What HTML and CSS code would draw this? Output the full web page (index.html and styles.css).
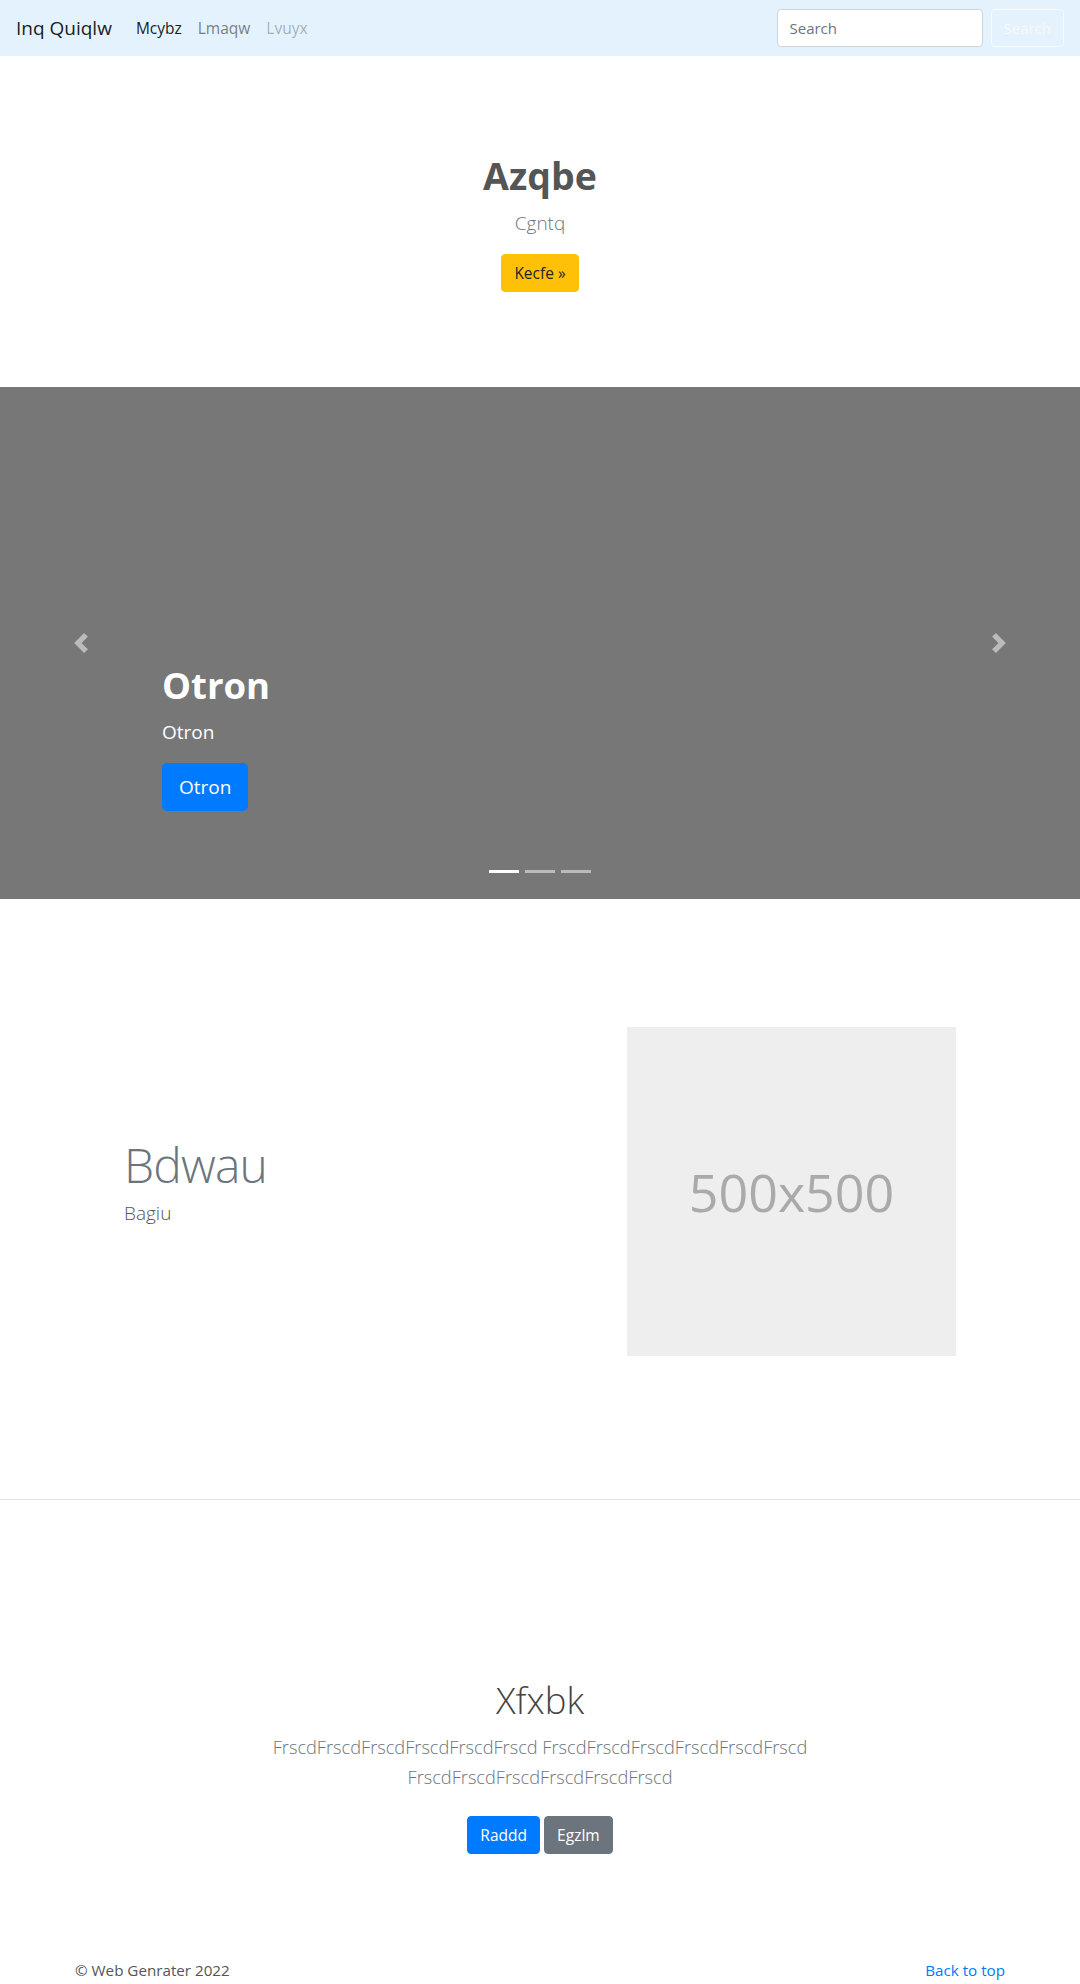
FILE: index.html
```html
<!DOCTYPE html>
<html lang="en">
<head>
<meta charset="utf-8">
<title>Inq Quiqlw</title>
<link rel="stylesheet" href="styles.css">
</head>
<body>
<nav class="navbar">
  <a class="brand" href="#">Inq Quiqlw</a>
  <ul class="nav">
    <li><a class="nav-link active" href="#">Mcybz</a></li>
    <li><a class="nav-link" href="#">Lmaqw</a></li>
    <li><a class="nav-link disabled" href="#">Lvuyx</a></li>
  </ul>
  <form class="search">
    <input class="search-input" type="search" placeholder="Search">
    <button class="btn-outline-light" type="button">Search</button>
  </form>
</nav>

<section class="hero">
  <h1 class="hero-title">Azqbe</h1>
  <p class="hero-lead">Cgntq</p>
  <a class="btn btn-warning" href="#">Kecfe »</a>
</section>

<div class="carousel">
  <div class="carousel-caption">
    <h1 class="caption-title">Otron</h1>
    <p class="caption-text">Otron</p>
    <p class="caption-action"><a class="btn-lg btn-primary" href="#">Otron</a></p>
  </div>
  <a class="control control-prev" href="#">
    <svg width="20" height="20" viewBox="0 0 8 8"><path fill="#fff" d="M5.25 0l-4 4 4 4 1.5-1.5L4.25 4l2.5-2.5L5.25 0z"/></svg>
  </a>
  <a class="control control-next" href="#">
    <svg width="20" height="20" viewBox="0 0 8 8"><path fill="#fff" d="M2.75 0l-1.5 1.5L3.75 4l-2.5 2.5L2.75 8l4-4-4-4z"/></svg>
  </a>
  <ol class="indicators">
    <li class="indicator active"></li>
    <li class="indicator"></li>
    <li class="indicator"></li>
  </ol>
</div>

<section class="featurette">
  <div class="featurette-text">
    <h2 class="featurette-heading">Bdwau</h2>
    <p class="featurette-lead">Bagiu</p>
  </div>
  <div class="placeholder">500x500</div>
</section>

<hr class="divider">

<section class="jumbo">
  <div class="jumbo-inner">
    <h1 class="jumbo-title">Xfxbk</h1>
    <p class="jumbo-lead">FrscdFrscdFrscdFrscdFrscdFrscd FrscdFrscdFrscdFrscdFrscdFrscd FrscdFrscdFrscdFrscdFrscdFrscd</p>
    <p class="jumbo-actions"><a class="btn btn-primary" href="#">Raddd</a> <a class="btn btn-secondary" href="#">Egzlm</a></p>
  </div>
</section>

<footer class="footer">
  <p class="footer-copy">© Web Genrater 2022</p>
  <p class="footer-top"><a href="#">Back to top</a></p>
</footer>
</body>
</html>
```

FILE: styles.css
```css
* { box-sizing: border-box; }

body {
  margin: 0;
  font-family: "Open Sans", "Noto Sans", sans-serif;
  font-size: 16px;
  line-height: 1.5;
  color: #212529;
  background: #fff;
}

a { text-decoration: none; }

/* Navbar */
.navbar {
  display: flex;
  align-items: center;
  padding: 8px 16px;
  background: #e3f2fd;
}
.brand {
  font-size: 19px;
  line-height: 30px;
  padding: 5px 0;
  margin-right: 16px;
  color: rgba(0,0,0,.9);
}
.nav {
  display: flex;
  list-style: none;
  margin: 0;
  padding: 0;
  flex: 1;
}
.nav-link {
  display: block;
  padding: 8px;
  font-size: 15.5px;
  line-height: 24px;
  color: rgba(0,0,0,.5);
}
.nav-link.active { color: rgba(0,0,0,.9); }
.nav-link.disabled { color: rgba(0,0,0,.3); }

.search { display: flex; }
.search-input {
  width: 206px;
  height: 38px;
  padding: 6px 12px;
  margin-right: 8px;
  font-family: inherit;
  font-size: 15px;
  color: #495057;
  background: #fff;
  border: 1px solid #ced4da;
  border-radius: 4px;
}
.search-input::placeholder { color: #6c757d; }
.btn-outline-light {
  height: 38px;
  padding: 6px 12px;
  font-family: inherit;
  font-size: 15px;
  color: #f8f9fa;
  background: transparent;
  border: 1px solid #f8f9fa;
  border-radius: 4px;
}

/* Buttons */
.btn {
  display: inline-block;
  padding: 6px 12px;
  font-size: 15.5px;
  line-height: 24px;
  border: 1px solid transparent;
  border-radius: 4px;
  vertical-align: middle;
}
.btn-warning { background: #ffc107; border-color: #ffc107; color: #212529; }
.btn-primary { background: #007bff; border-color: #007bff; color: #fff; }
.btn-secondary { background: #6c757d; border-color: #6c757d; color: #fff; }

/* Hero */
.hero {
  padding: 96px 0 95px;
  text-align: center;
}
.hero-title {
  margin: 0 0 8px;
  font-size: 37.5px;
  font-weight: 700;
  line-height: 48px;
  color: #555;
}
.hero-lead {
  margin: 0 0 16px;
  font-size: 19px;
  line-height: 30px;
  font-weight: 300;
  color: #6c757d;
}

/* Carousel */
.carousel {
  position: relative;
  height: 512px;
  background: #777;
  display: flex;
  align-items: flex-end;
  padding: 0 15% 48px;
}
.carousel-caption {
  width: 100%;
  padding: 20px 0 24px;
  color: #fff;
}
.caption-title {
  margin: 0 0 8px;
  font-size: 36.5px;
  font-weight: 700;
  line-height: 48px;
}
.caption-text {
  margin: 0 0 16px;
  font-size: 19px;
  line-height: 30px;
}
.caption-action { margin: 0 0 16px; }
.btn-lg {
  display: inline-block;
  padding: 8px 16px;
  font-size: 19px;
  line-height: 30px;
  border: 1px solid transparent;
  border-radius: 5px;
}
.control {
  position: absolute;
  top: 0;
  bottom: 0;
  width: 15%;
  display: flex;
  align-items: center;
  justify-content: center;
  opacity: .5;
}
.control-prev { left: 0; }
.control-next { right: 0; }
.indicators {
  position: absolute;
  left: 15%;
  right: 15%;
  bottom: 0;
  margin: 0 0 16px;
  padding: 0;
  list-style: none;
  display: flex;
  justify-content: center;
}
.indicator {
  width: 30px;
  height: 23px;
  margin: 0 3px;
  border-top: 10px solid transparent;
  border-bottom: 10px solid transparent;
  background: #fff;
  background-clip: padding-box;
  opacity: .5;
}
.indicator.active { opacity: 1; }

/* Featurette */
.featurette {
  display: flex;
  align-items: center;
  padding: 128px 124px 63px;
}
.featurette-text { flex: 1; }
.featurette-heading {
  margin: 0 0 8px;
  font-size: 48px;
  font-weight: 300;
  line-height: 50px;
  letter-spacing: -0.8px;
  color: #6c757d;
}
.featurette-lead {
  margin: 0 0 16px;
  font-size: 19px;
  line-height: 30px;
  font-weight: 300;
  color: #555;
}
.placeholder {
  width: 329px;
  height: 329px;
  background: #eee;
  color: #aaa;
  display: flex;
  align-items: center;
  justify-content: center;
  font-size: 52px;
}

.divider {
  margin: 80px 0;
  border: 0;
  border-top: 1px solid rgba(0,0,0,.1);
  height: 0;
}

/* Jumbotron */
.jumbo {
  padding: 96px 0;
  text-align: center;
}
.jumbo-inner {
  max-width: 640px;
  margin: 0 auto;
  padding: 0 15px;
}
.jumbo-title {
  margin: 0 0 8px;
  font-size: 36.5px;
  font-weight: 300;
  line-height: 48px;
  color: #444;
}
.jumbo-lead {
  margin: 0 0 16px;
  font-size: 18.2px;
  line-height: 30px;
  font-weight: 300;
  color: #6c757d;
}
.jumbo-actions { margin: 0; }
.jumbo-actions .btn { margin: 8px 0; }

/* Footer */
.footer {
  max-width: 960px;
  margin: 0 auto;
  padding: 0 15px;
  display: flex;
  justify-content: space-between;
  font-size: 15.2px;
  line-height: 24px;
  color: #555;
}
.footer p { margin: 0 0 16px; }
.footer-top a { color: #007bff; }
```
